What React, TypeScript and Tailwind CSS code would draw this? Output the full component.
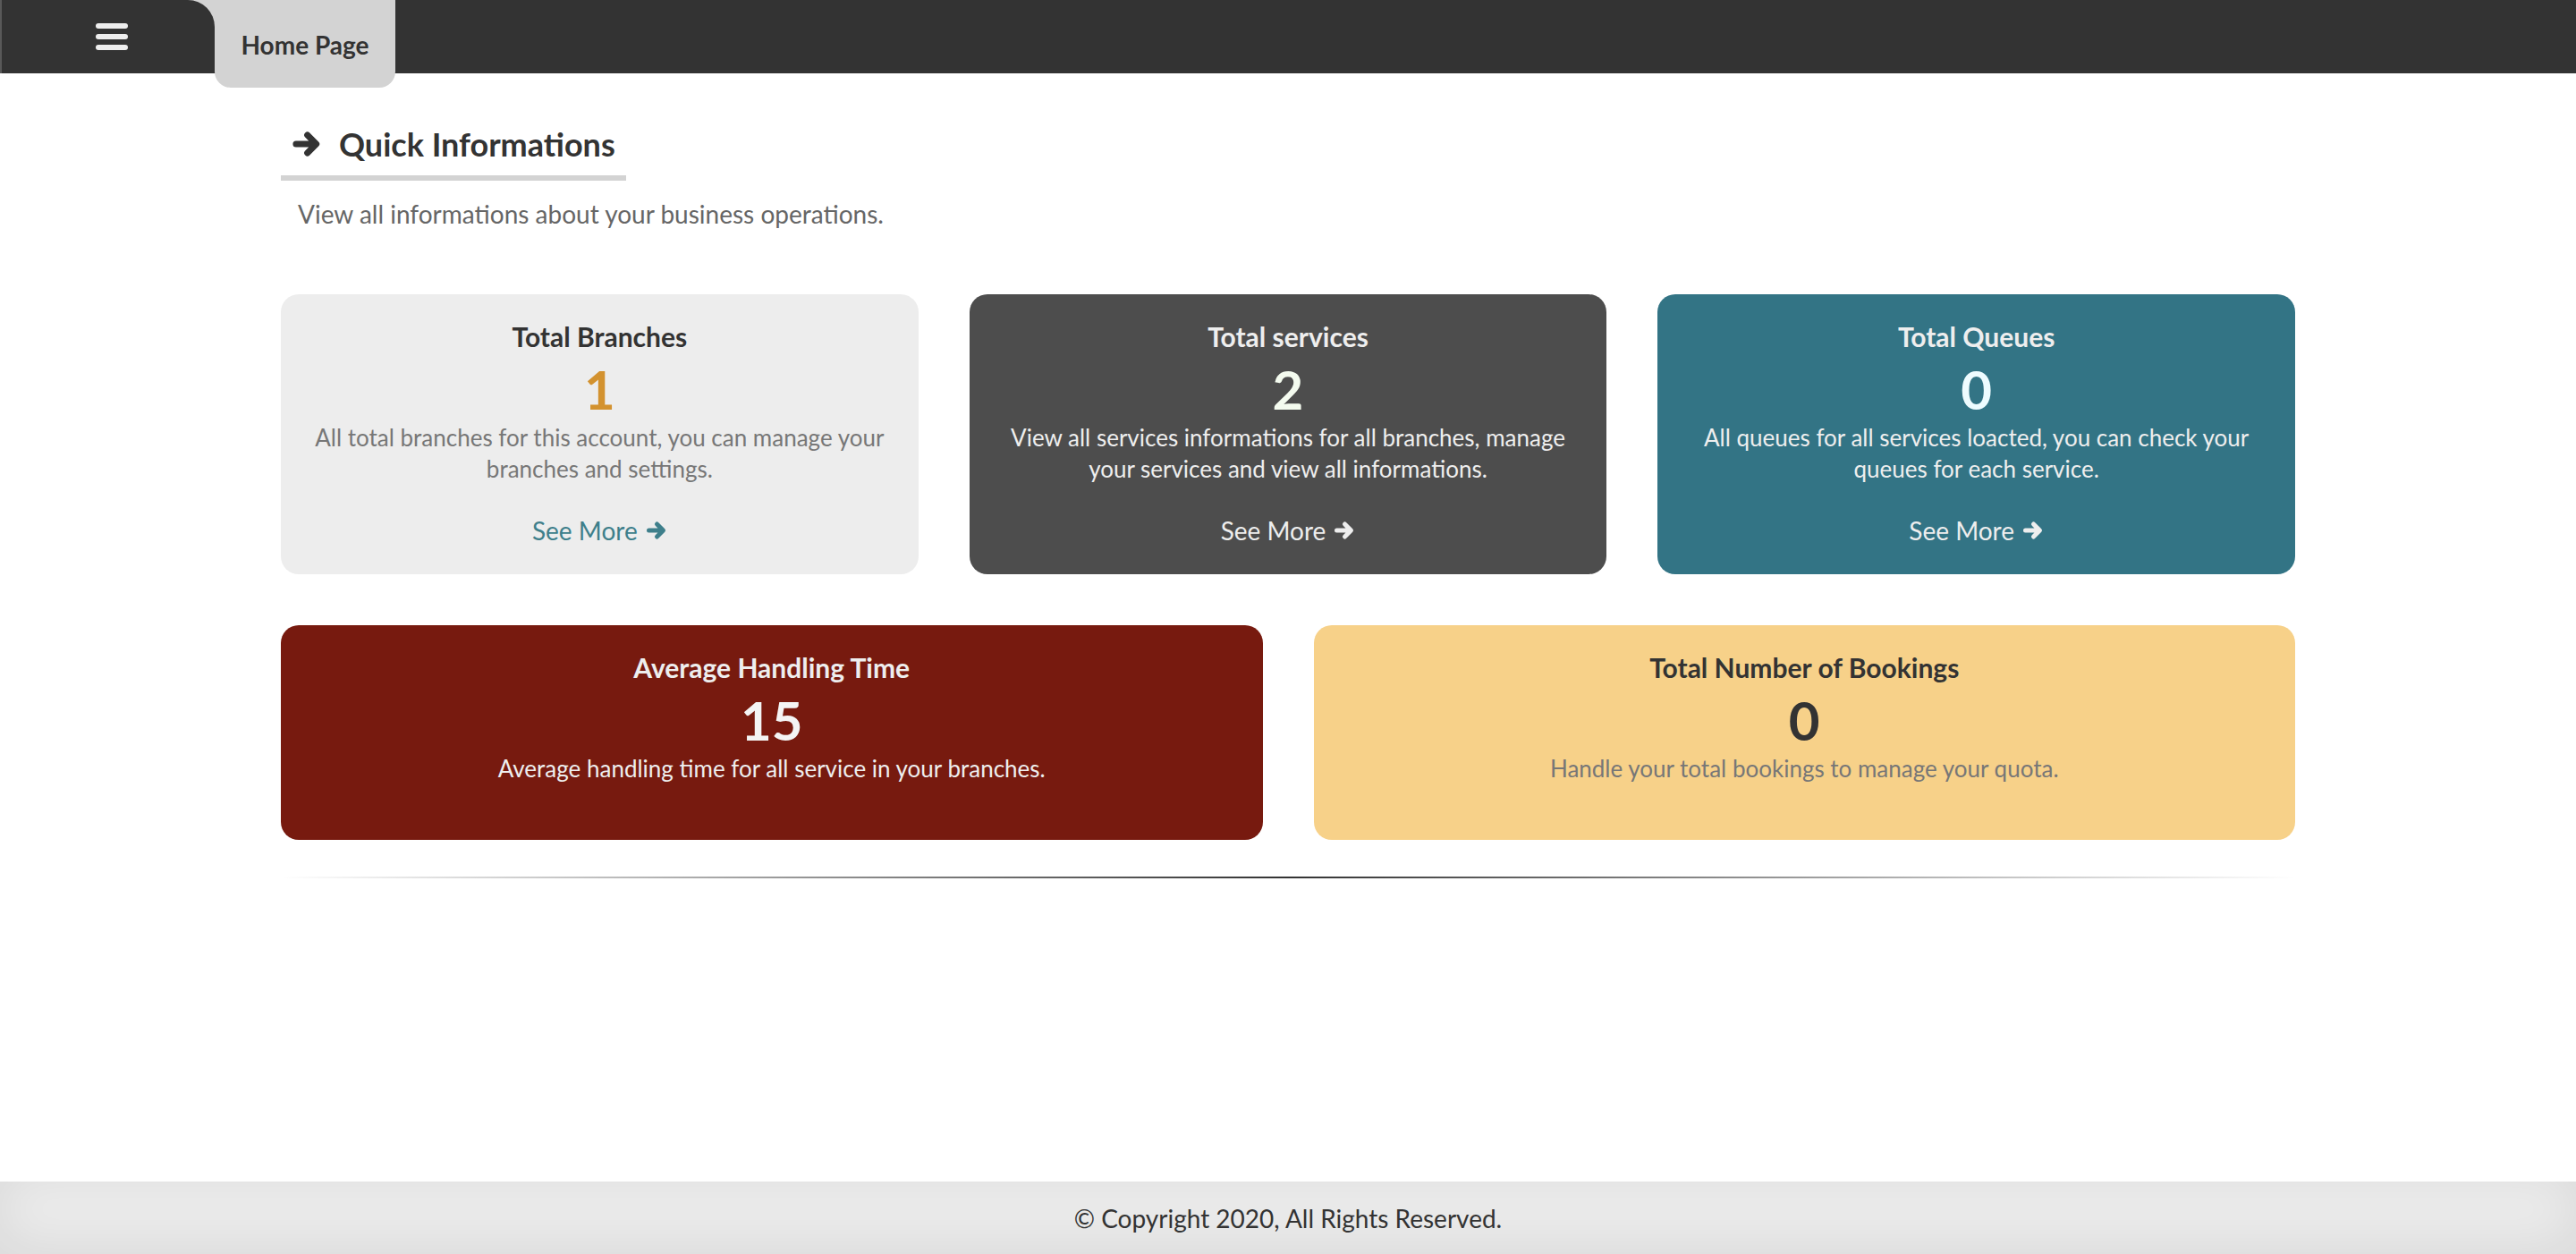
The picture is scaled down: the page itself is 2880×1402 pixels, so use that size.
import React from "react";

function Arrow({ className }: { className?: string }) {
  return (
    <svg className={className} viewBox="0 0 24 24" fill="none" stroke="currentColor" strokeWidth="5" strokeLinecap="round" strokeLinejoin="round">
      <path d="M3.5 12 H18.5 M12.5 5 L19.5 12 L12.5 19" />
    </svg>
  );
}

type CardProps = {
  title: string;
  value: string;
  desc: string;
  bg: string;
  titleColor: string;
  valueColor: string;
  descColor: string;
  moreColor?: string;
  showMore: boolean;
};

function Card({ title, value, desc, bg, titleColor, valueColor, descColor, moreColor, showMore }: CardProps) {
  return (
    <div className={`${bg} rounded-[20px] px-[36px] pt-[30px] ${showMore ? "pb-[29px]" : "pb-[62px]"} text-center`}>
      <div className={`${titleColor} text-[30px] leading-[34px] font-bold`}>{title}</div>
      <div className={`${valueColor} mt-[10px] text-[60px] leading-[64px] font-bold`}>{value}</div>
      <div className={`${descColor} mt-[5px] text-[26px] leading-[35px]`}>{desc}</div>
      {showMore && (
        <div className={`${moreColor} mt-[31px] text-[28px] leading-[40px] flex items-center justify-center gap-[9px]`}>
          <span>See More</span>
          <Arrow className="w-[24px] h-[24px]" />
        </div>
      )}
    </div>
  );
}

export default function App() {
  return (
    <div className="min-h-screen flex flex-col bg-white" style={{ fontFamily: "Lato, 'Open Sans', sans-serif" }}>
      <header className="h-[82px] bg-[#333] flex items-start border-l-[2px] border-[#595959]">
        <div className="h-[82px] bg-[#d3d3d3]">
          <div className="w-[238px] h-[82px] bg-[#333] rounded-tr-[30px] flex items-center justify-center pl-[8px]">
            <svg width="36" height="30" viewBox="0 0 36 30" fill="#eeeeee">
              <rect x="0" y="0" width="36" height="6" rx="3" />
              <rect x="0" y="12" width="36" height="6" rx="3" />
              <rect x="0" y="24" width="36" height="6" rx="3" />
            </svg>
          </div>
        </div>
        <div className="w-[202px] h-[98px] bg-[#d3d3d3] rounded-b-[18px] flex items-start justify-center pt-[33px]">
          <span className="text-[28px] leading-[34px] font-bold text-[#333]">Home Page</span>
        </div>
      </header>

      <main className="flex-1">
        <div className="w-[2252px] mx-auto">
          <div className="mt-[57px] inline-flex items-center gap-[19px] pl-[12px] pr-[12px] pb-[13px] border-b-[6px] border-[#d3d3d3]">
            <Arrow className="w-[34px] h-[34px] text-[#333]" />
            <h2 className="text-[36px] leading-[44px] font-bold text-[#333]">Quick Informations</h2>
          </div>
          <p className="mt-[17px] pl-[19px] text-[28px] leading-[40px] text-[#666]">
            View all informations about your business operations.
          </p>

          <div className="mt-[70px] grid grid-cols-3 gap-[57px]">
            <Card
              title="Total Branches"
              value="1"
              desc="All total branches for this account, you can manage your branches and settings."
              bg="bg-[#ededed]"
              titleColor="text-[#333]"
              valueColor="text-[#d3922f]"
              descColor="text-[#777]"
              moreColor="text-[#3e7f8b]"
              showMore
            />
            <Card
              title="Total services"
              value="2"
              desc="View all services informations for all branches, manage your services and view all informations."
              bg="bg-[#4d4d4d]"
              titleColor="text-[#eeeeee]"
              valueColor="text-[#f4fbef]"
              descColor="text-[#eeeeee]"
              moreColor="text-[#eeeeee]"
              showMore
            />
            <Card
              title="Total Queues"
              value="0"
              desc="All queues for all services loacted, you can check your queues for each service."
              bg="bg-[#337485]"
              titleColor="text-[#eeeeee]"
              valueColor="text-[#eefcff]"
              descColor="text-[#eeeeee]"
              moreColor="text-[#eeeeee]"
              showMore
            />
          </div>

          <div className="mt-[57px] grid grid-cols-2 gap-[57px]">
            <Card
              title="Average Handling Time"
              value="15"
              desc="Average handling time for all service in your branches."
              bg="bg-[#771a0f]"
              titleColor="text-[#eeeeee]"
              valueColor="text-[#f4f4f4]"
              descColor="text-[#eeeeee]"
              showMore={false}
            />
            <Card
              title="Total Number of Bookings"
              value="0"
              desc="Handle your total bookings to manage your quota."
              bg="bg-[#f7d189]"
              titleColor="text-[#333]"
              valueColor="text-[#333]"
              descColor="text-[#777]"
              showMore={false}
            />
          </div>

          <div className="mt-[41px] h-[2px] bg-gradient-to-r from-transparent via-[#333] to-transparent" />
        </div>
      </main>

      <footer className="h-[81px] bg-[#ececec] shadow-[inset_0_-10px_60px_rgba(0,0,0,0.08)] flex items-center justify-center">
        <span className="text-[28px] leading-[40px] text-[#333]">© Copyright 2020, All Rights Reserved.</span>
      </footer>
    </div>
  );
}
